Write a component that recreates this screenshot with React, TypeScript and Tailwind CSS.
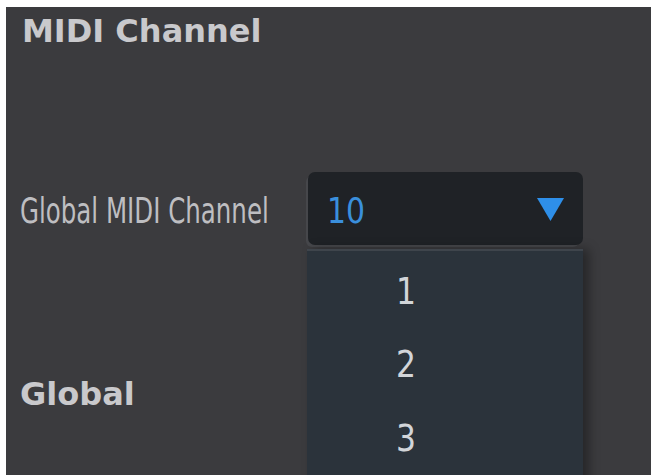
const channels = ["1", "2", "3"];

const Triangle = () => (
  <svg width="27" height="24" viewBox="0 0 27 24" className="block">
    <polygon points="0,1 27,1 13.5,24" fill="#2e8fe9" />
  </svg>
);

export default function App() {
  return (
    <div className="w-[653px] h-[475px] bg-white pt-[7px] pl-[6px] pr-[2px] overflow-hidden">
      <div className="relative h-full bg-[#3b3b3e] overflow-hidden font-['DejaVu_Sans',sans-serif]">
        <h2 className="pl-[16px] pt-[8px] text-[32px] leading-[32px] font-bold text-[#c9c9cc]">
          MIDI Channel
        </h2>

        <div className="flex items-center mt-[125px]">
          <div className="w-[302px] pl-[14px] shrink-0">
            <span className="inline-block origin-left scale-x-[0.7] text-[35px] leading-[40px] text-[#bebec1] whitespace-nowrap mt-[5px]">
              Global MIDI Channel
            </span>
          </div>
          <div className="w-[275px] h-[73px] rounded-[7px] bg-[#1f2226] shadow-[-3px_3px_0_-1px_#46474b] flex items-center justify-between pl-[19px] pr-[19px]">
            <span className="inline-block origin-left scale-x-[0.83] text-[36px] leading-[40px] text-[#3a8fdc] mt-[4px]">
              10
            </span>
            <Triangle />
          </div>
        </div>

        <h2 className="pl-[14px] mt-[133px] text-[32px] leading-[32px] font-bold text-[#c9c9cc]">
          Global
        </h2>

        {/* open dropdown list */}
        <div className="absolute left-[301px] top-[242px] w-[276px] h-[300px] bg-[#2b333b] border-t-[2px] border-[#3f454c] shadow-[6px_0_10px_rgba(0,0,0,0.35)] pt-[4px]">
          {channels.map((c) => (
            <div key={c} className="h-[73.5px] flex items-center pl-[89px]">
              <span className="inline-block origin-left scale-x-[0.85] text-[37px] leading-[40px] text-[#d2d5d9]">
                {c}
              </span>
            </div>
          ))}
        </div>
      </div>
    </div>
  );
}
